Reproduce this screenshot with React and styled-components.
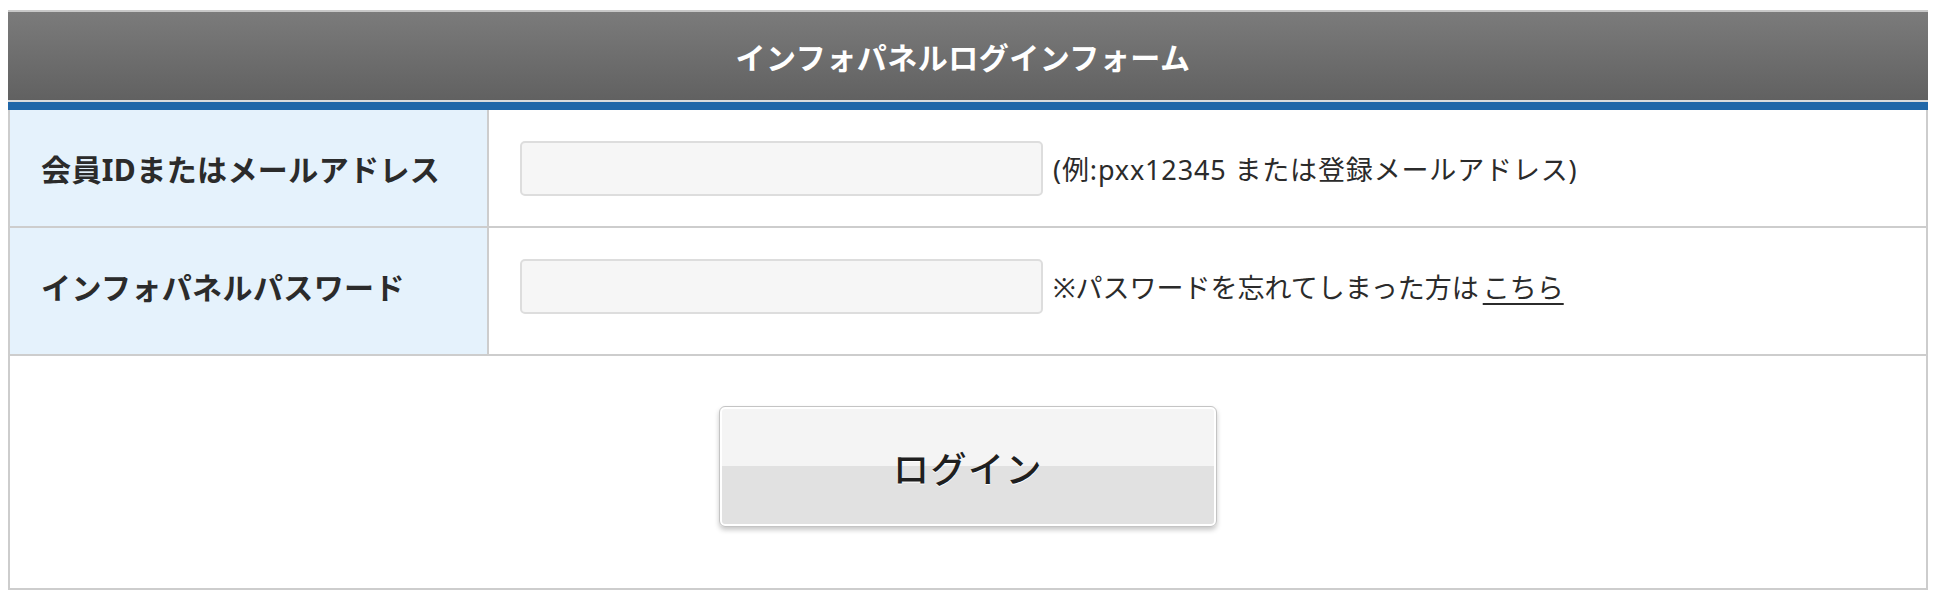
import React from 'react';
import styled, { createGlobalStyle } from 'styled-components';

const GlobalStyle = createGlobalStyle`
  body {
    margin: 0;
    background: #fff;
    font-family: "Noto Sans", "Noto Sans CJK JP", sans-serif;
    color: #333;
  }
`;

const FormBox = styled.form`
  width: 1920px;
  margin: 10px 0 0 8px;
`;

const Header = styled.div`
  height: 88px;
  box-sizing: content-box;
  padding-right: 10px;
  border-top: 2px solid #c8c8c8;
  border-bottom: 2px solid #dcdcdc;
  background: linear-gradient(to bottom, #7b7b7b, #616161);
  display: flex;
  align-items: center;
  justify-content: center;
  color: #fff;
  font-size: 30px;
  font-weight: 700;
  letter-spacing: 0.5px;
`;

const BlueBar = styled.div`
  height: 8px;
  background: #2167a8;
`;

const Table = styled.div`
  border-left: 2px solid #cdcdcd;
  border-right: 2px solid #cdcdcd;
  border-bottom: 2px solid #cdcdcd;
`;

const Row = styled.div`
  display: flex;
  height: ${p => p.$height}px;
  border-bottom: 2px solid #cdcdcd;
`;

const Label = styled.div`
  width: 479px;
  flex-shrink: 0;
  box-sizing: border-box;
  padding: ${p => p.$pad || '0'};
  padding-left: 31px;
  border-right: 2px solid #cdcdcd;
  background: #e5f2fc;
  display: flex;
  align-items: center;
  font-size: 30px;
  font-weight: 700;
  letter-spacing: 0.4px;
  color: #2b2b2b;
`;

const Value = styled.div`
  flex: 1;
  display: flex;
  align-items: center;
  padding: ${p => p.$pad || '0'};
  padding-left: 31px;
  gap: 10px;
`;

const TextInput = styled.input`
  width: 523px;
  height: 55px;
  box-sizing: border-box;
  border: 2px solid #dddddd;
  border-radius: 5px;
  background: #f6f6f6;
  outline: none;
`;

const Note = styled.span`
  font-size: 27px;
  color: #2b2b2b;
  white-space: nowrap;
  letter-spacing: ${p => p.$spacing || 0}px;

  a {
    margin-left: 4px;
    color: #2b2b2b;
    text-decoration: underline;
    text-underline-offset: 5px;
  }
`;

const SubmitArea = styled.div`
  height: 232px;
  display: flex;
  justify-content: center;
  padding-top: 50px;
  box-sizing: border-box;
`;

const LoginButton = styled.button`
  width: 498px;
  height: 121px;
  border: 1px solid #c4c4c4;
  border-radius: 6px;
  box-shadow: inset 0 0 0 2px #fff, 0 3px 5px rgba(0, 0, 0, 0.22);
  background: linear-gradient(to bottom, #f4f4f4 0%, #f4f4f4 50%, #e1e1e1 50%, #e1e1e1 100%);
  font-family: "Noto Sans CJK JP", sans-serif;
  font-size: 36px;
  font-weight: 500;
  letter-spacing: 1.5px;
  color: #1f1f1f;
  text-shadow: 0 1px 0 #fff;
  cursor: pointer;
`;

export default function App() {
  return (
    <>
      <GlobalStyle />
      <FormBox onSubmit={e => e.preventDefault()}>
        <Header>インフォパネルログインフォーム</Header>
        <BlueBar />
        <Table>
          <Row $height={116}>
            <Label>会員IDまたはメールアドレス</Label>
            <Value>
              <TextInput type="text" />
              <Note $spacing={0.85}>(例:pxx12345 または登録メールアドレス)</Note>
            </Value>
          </Row>
          <Row $height={126}>
            <Label $pad="0 0 10px 0">インフォパネルパスワード</Label>
            <Value $pad="0 0 10px 0">
              <TextInput type="password" />
              <Note>※パスワードを忘れてしまった方は<a href="#">こちら</a></Note>
            </Value>
          </Row>
          <SubmitArea>
            <LoginButton type="submit">ログイン</LoginButton>
          </SubmitArea>
        </Table>
      </FormBox>
    </>
  );
}
